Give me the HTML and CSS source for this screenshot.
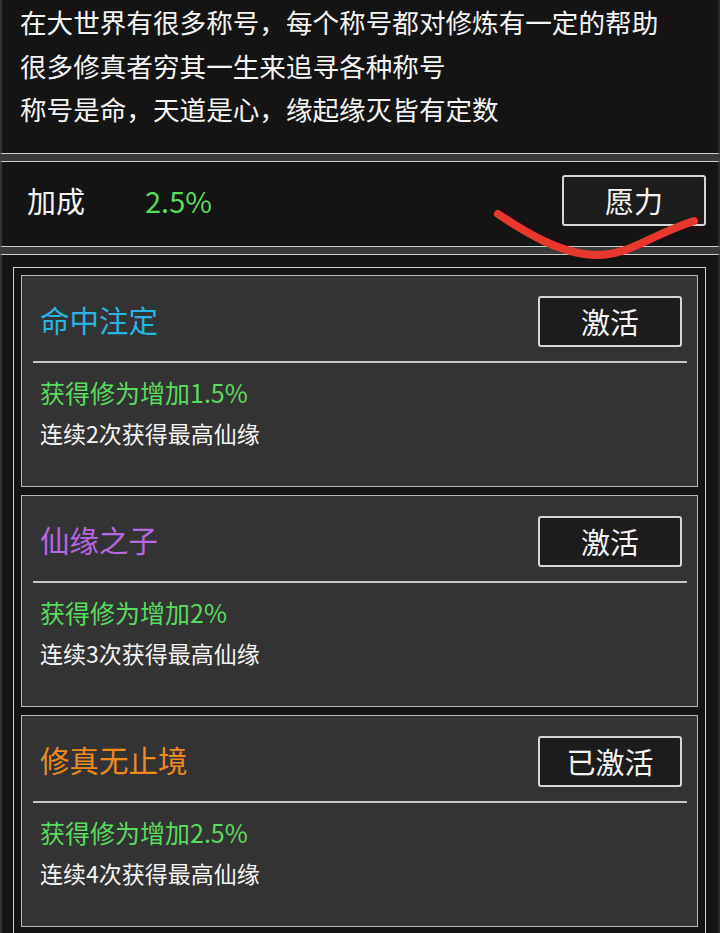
FILE: index.html
```html
<!doctype html>
<html lang="zh-CN">
<head>
  <meta charset="utf-8">
  <title>称号</title>
  <link rel="stylesheet" href="styles.css">
</head>
<body>
  <div class="page">
    <section class="panel intro">
      <p>在大世界有很多称号，每个称号都对修炼有一定的帮助</p>
      <p>很多修真者穷其一生来追寻各种称号</p>
      <p>称号是命，天道是心，缘起缘灭皆有定数</p>
    </section>
    <div class="strip"></div>
    <section class="panel bonus">
      <span class="bonus-label">加成</span>
      <span class="bonus-value">2.5%</span>
      <button class="btn bonus-btn">愿力</button>
    </section>
    <div class="strip"></div>
    <section class="panel list">
      <div class="list-box">
        <div class="card">
          <div class="card-head">
            <h2 class="title title-blue">命中注定</h2>
            <button class="btn">激活</button>
          </div>
          <div class="card-body">
            <p class="effect">获得修为增加1.5%</p>
            <p class="cond">连续2次获得最高仙缘</p>
          </div>
        </div>
        <div class="card">
          <div class="card-head">
            <h2 class="title title-purple">仙缘之子</h2>
            <button class="btn">激活</button>
          </div>
          <div class="card-body">
            <p class="effect">获得修为增加2%</p>
            <p class="cond">连续3次获得最高仙缘</p>
          </div>
        </div>
        <div class="card">
          <div class="card-head">
            <h2 class="title title-orange">修真无止境</h2>
            <button class="btn">已激活</button>
          </div>
          <div class="card-body">
            <p class="effect">获得修为增加2.5%</p>
            <p class="cond">连续4次获得最高仙缘</p>
          </div>
        </div>
      </div>
    </section>
    <!-- hand-drawn red mark over the bonus row -->
    <svg class="scribble" width="720" height="280" viewBox="0 0 720 280">
      <path d="M498 214 C 525 232, 560 254, 595 255 C 628 256, 648 236, 694 221" fill="none" stroke="#e8372c" stroke-width="8" stroke-linecap="round"/>
    </svg>
  </div>
</body>
</html>
```

FILE: styles.css
```css
:root {
  --bg: #141414;
  --card-bg: #333333;
  --strip: #3a3a3a;
  --line: #cdcdcd;
  --text: #f4f4f4;
  --green: #58dc5e;
}
/* Page */
* { box-sizing: border-box; margin: 0; padding: 0; }
body {
  background: var(--bg);
  color: var(--text);
  font-family: "Noto Sans CJK SC", "Noto Sans", sans-serif;
}
.page {
  position: relative;
  width: 720px;
}
.panel {
  background: var(--bg);
  border-left: 2px solid #333;
  border-right: 2px solid #2a2a2a;
}
.strip {
  height: 7px;
  background: var(--strip);
}
/* Intro text */
.intro {
  height: 154px;
  padding: 0 18px;
  border-bottom: 1px solid var(--line);
  font-size: 26.6px;
  line-height: 43.5px;
}
/* Bonus row */
.bonus {
  display: flex;
  align-items: center;
  height: 86px;
  padding: 0 12px 8px 25px;
  border-top: 1px solid var(--line);
  border-bottom: 1px solid var(--line);
}
.bonus-label {
  font-size: 29px;
  width: 118px;
}
.bonus-value {
  font-size: 29px;
  color: var(--green);
}
.bonus-btn {
  margin-left: auto;
  background: #1a1a1a;
}
/* Buttons */
.btn {
  width: 144px;
  height: 51px;
  border: 2px solid #d6d6d6;
  border-radius: 3px;
  background: #1c1c1c;
  color: var(--text);
  font-family: inherit;
  font-size: 29px;
  line-height: 1;
}
/* Title list */
.list {
  border-top: 1px solid var(--line);
  padding: 12px 12px 0 11px;
}
.list-box {
  border: 1px solid var(--line);
  padding: 7px;
  display: flex;
  flex-direction: column;
  gap: 8px;
}
.card {
  background: var(--card-bg);
  border: 1px solid #b9b9b9;
  height: 212px;
}
.card-head {
  display: flex;
  align-items: center;
  justify-content: space-between;
  margin: 0 10px 0 11px;
  padding: 20px 5px 14px 7px;
  border-bottom: 2px solid #c8c8c8;
}
.title {
  font-size: 29.5px;
  font-weight: 400;
  line-height: 1;
  margin-top: -3px;
}
.title-blue { color: #29b4e2; }
.title-purple { color: #b866e4; }
.title-orange { color: #f08a1c; }
.card-body {
  padding: 13px 0 0 18px;
}
.effect {
  color: var(--green);
  font-size: 25px;
  line-height: 32px;
}
.cond {
  margin-top: 10px;
  font-size: 23px;
  line-height: 30px;
}
/* Annotation */
.scribble {
  position: absolute;
  left: 0;
  top: 0;
  pointer-events: none;
}
```
